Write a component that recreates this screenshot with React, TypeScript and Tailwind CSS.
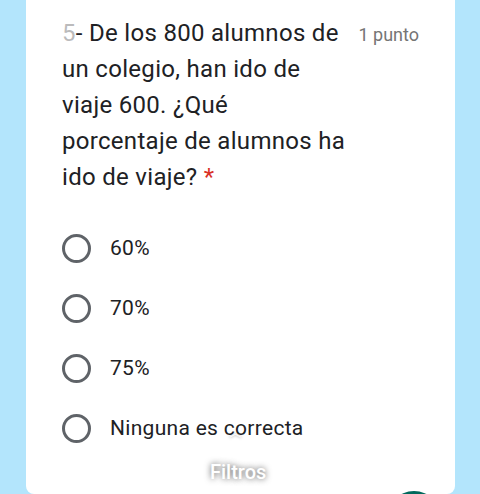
import React from 'react';

const options = ['60%', '70%', '75%', 'Ninguna es correcta'];

function Radio() {
  return (
    <span className="block h-[29px] w-[29px] shrink-0 rounded-full border-[3px] border-[#5f6368]" />
  );
}

export default function App() {
  return (
    <div className="relative h-[494px] w-[480px] overflow-hidden bg-[#b3e5fc] pl-[26px] pr-[25px] font-['Roboto',sans-serif]">
      <div className="h-[494px] rounded-b-[8px] bg-white pl-[36px] pr-[36px] pt-[15px]">
        {/* Question header */}
        <div className="flex items-start justify-between">
          <div className="text-[24px] leading-[36px] tracking-[0.3px] text-[#202124]">
            <span className="opacity-30">5</span>- De los 800 alumnos de
            <br />
            un colegio, han ido de
            <br />
            viaje 600. ¿Qué
            <br />
            porcentaje de alumnos ha
            <br />
            ido de viaje? <span className="text-[#d93025]">*</span>
          </div>
          <div className="pt-[9px] text-[18px] leading-[22px] text-[#757575]">1 punto</div>
        </div>

        {/* Options */}
        <div className="mt-[23px] flex flex-col">
          {options.map((opt) => (
            <div key={opt} className="flex h-[60px] items-center gap-[19px]">
              <Radio />
              <span className="text-[21px] leading-[24px] tracking-[0.3px] text-[#202124]">{opt}</span>
            </div>
          ))}
        </div>
      </div>

      {/* Overlay elements */}
      <div className="absolute left-[229px] top-[426px] text-[14px] leading-[14px] text-white [text-shadow:0_0_3px_rgba(0,0,0,0.6)]">
        ︿
      </div>
      <div className="absolute left-[210px] top-[459px] text-[20px] font-medium leading-[26px] text-white [text-shadow:0_0_6px_rgba(0,0,0,0.7)]">
        Filtros
      </div>
      <div className="absolute left-[386px] top-[491px] h-[56px] w-[56px] rounded-full bg-[#00695c]" />
    </div>
  );
}
